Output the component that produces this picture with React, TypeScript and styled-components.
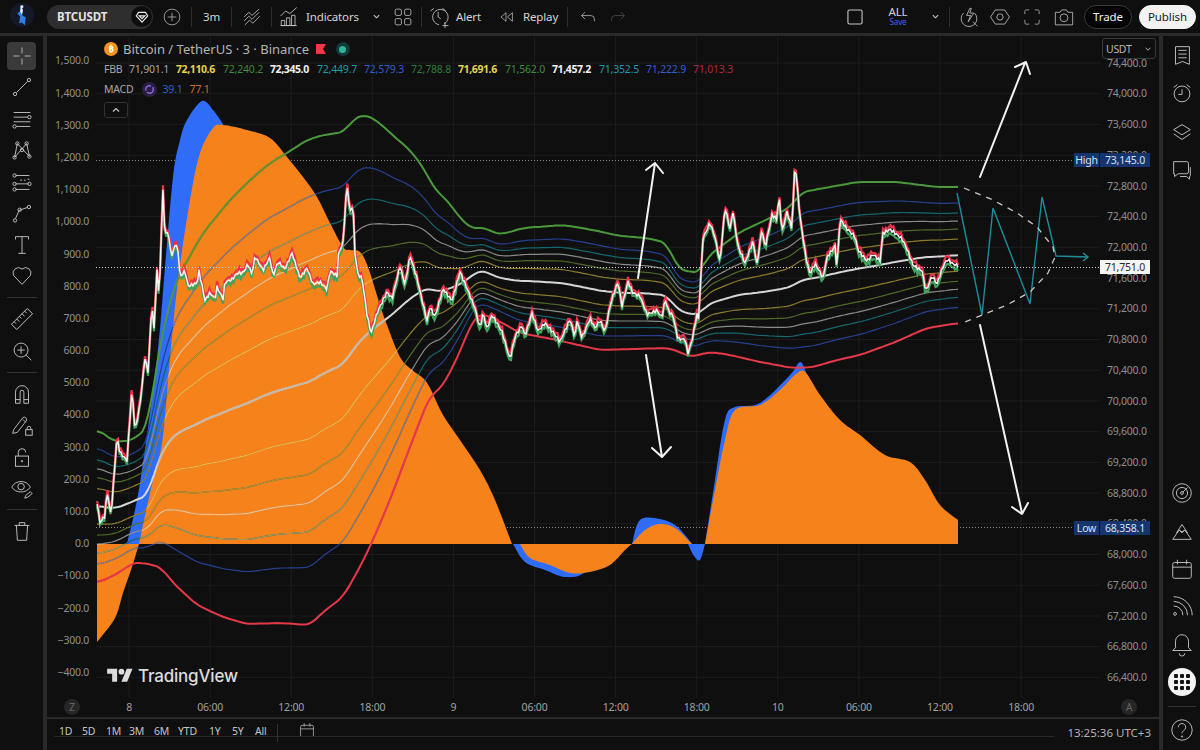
import React from "react";
import styled, { createGlobalStyle } from "styled-components";

type Pt = [number, number];

const GlobalStyle = createGlobalStyle`
  html, body { margin: 0; padding: 0; background: #2a2a2a; }
  * { box-sizing: border-box; }
`;

const FONT = `"Noto Sans", "Liberation Sans", sans-serif`;
const ZERO_Y = 544;

// chart data, read off in page coordinates
const topLine: Pt[] = [[97,429],[115,442],[133,440],[148,427],[157,360],[170,300],[178,277],[203,233],[230,200],[250,180],[270,163],[287,153],[307,140],[323,135],[345,132],[352,120],[365,114],[380,123],[390,133],[410,150],[423,167],[435,190],[447,200],[460,218],[472,229],[485,227],[493,233],[503,234],[523,228],[563,225],[593,230],[620,236],[647,238],[667,243],[675,263],[680,270],[700,273],[707,257],[740,232],[770,218],[790,207],[802,192],[830,187],[857,182],[897,182],[937,187],[958,187]];
const bottomLine: Pt[] = [[97,583],[115,575],[133,563],[140,562],[148,565],[152,563],[157,567],[162,568],[173,583],[197,605],[223,617],[247,624],[280,623],[310,625],[323,612],[343,597],[360,567],[373,540],[390,500],[405,460],[430,395],[440,390],[455,363],[473,320],[480,313],[497,320],[520,333],[557,340],[600,350],[667,348],[680,352],[690,357],[710,352],[730,355],[760,362],[793,368],[813,367],[837,360],[860,355],[893,343],[927,328],[958,323]];
const price: Pt[] = [[97,503],[100,523],[105,517],[107,492],[111,517],[117,438],[120,453],[127,460],[132,387],[135,430],[140,403],[145,357],[148,372],[152,303],[154,330],[157,270],[159,300],[163,190],[165,240],[167,230],[172,257],[175,245],[178,250],[180,277],[185,270],[188,285],[197,282],[199,270],[205,300],[210,293],[215,300],[217,288],[223,300],[225,283],[232,280],[237,273],[243,272],[248,263],[252,273],[255,255],[263,270],[270,258],[273,277],[278,263],[285,270],[292,253],[300,277],[307,267],[313,283],[320,282],[327,290],[330,272],[337,277],[338,257],[343,243],[347,183],[350,213],[353,203],[355,253],[358,273],[362,277],[367,313],[371,333],[377,313],[380,307],[387,293],[392,300],[400,267],[405,285],[410,255],[417,277],[423,303],[427,320],[430,307],[435,317],[443,290],[452,302],[460,272],[468,290],[475,307],[480,327],[483,312],[487,328],[492,315],[502,333],[510,360],[515,337],[522,325],[525,335],[532,312],[538,330],[545,323],[553,333],[560,343],[570,320],[575,337],[577,320],[582,337],[590,317],[595,327],[600,320],[605,332],[610,307],[613,297],[618,283],[622,307],[628,282],[633,293],[640,295],[647,313],[657,310],[662,318],[665,300],[669,313],[673,317],[678,340],[685,340],[688,353],[692,340],[697,313],[698,327],[703,237],[710,222],[715,237],[720,263],[725,208],[730,230],[733,213],[738,247],[745,263],[753,240],[757,263],[762,227],[765,247],[772,215],[777,220],[779,195],[782,233],[787,213],[792,230],[795,162],[800,217],[806,257],[810,273],[815,262],[823,277],[827,257],[835,247],[837,270],[840,220],[847,230],[855,237],[858,250],[867,260],[873,253],[880,260],[883,233],[890,230],[902,240],[907,250],[913,265],[922,270],[926,290],[932,275],[937,283],[943,267],[947,260],[953,265],[958,267]];

const orangeAreas: Pt[][] = [
  [[97,642],[115,618],[123,593],[132,567],[139,544]],
  [[139,544],[150,493],[162,443],[170,358],[178,280],[190,200],[200,153],[213,128],[223,125],[247,130],[270,138],[287,157],[303,177],[317,197],[330,223],[343,247],[350,250],[360,252],[368,267],[380,305],[387,325],[400,357],[412,370],[423,378],[430,388],[443,415],[460,440],[480,470],[495,500],[512,544]],
  [[520,544],[530,558],[550,565],[570,573],[590,572],[610,565],[625,550],[632,544]],
  [[632,544],[645,530],[660,524],[675,528],[690,542],[692,544]],
  [[705,544],[715,490],[725,440],[735,410],[760,405],[780,390],[795,375],[805,372],[820,395],[840,420],[860,435],[885,455],[910,462],[925,480],[940,505],[958,520]],
];
// only the outer edge of each blue part shows, the orange is painted over the rest
const blueAreas: Pt[][] = [
  [[127,544],[140,483],[157,358],[165,267],[173,177],[180,140],[187,120],[202,101],[213,110],[223,124]],
  [[513,544],[525,562],[545,570],[565,577],[585,572],[600,544]],
  [[632,544],[640,520],[660,519],[675,525],[685,535],[692,544]],
  [[688,544],[694,556],[700,560],[705,544]],
  [[705,544],[715,480],[725,420],[735,407],[760,403],[790,375],[800,362],[806,372]],
];

const bands = [
  { r: 1, dark: "#4a9a3c", tint: "#6d8f2c", w: 2 },
  { r: 0.764, dark: "#26408f", tint: "#94806e", w: 1.2 },
  { r: 0.618, dark: "#14666f", tint: "#ac9650", w: 1.2 },
  { r: 0.5, dark: "#8a8a8a", tint: "#f7bd7c", w: 1.2 },
  { r: 0.382, dark: "#4f6a2a", tint: "#b78f36", w: 1.2 },
  { r: 0.236, dark: "#8c7b2a", tint: "#fab347", w: 1.2 },
];

const lerp = (line: Pt[], x: number) => {
  for (let i = 1; i < line.length; i++) {
    if (x <= line[i][0]) {
      const [x0, y0] = line[i - 1];
      const [x1, y1] = line[i];
      return y0 + ((y1 - y0) * (x - x0)) / (x1 - x0);
    }
  }
  return line[line.length - 1][1];
};

const toD = (pts: Pt[]) => "M" + pts.map(([x, y]) => `${x} ${y.toFixed(1)}`).join("L");

// Catmull-Rom through the points, then closed along the zero line of the histogram
const toArea = (pts: Pt[]) => {
  let d = `M${pts[0][0]} ${pts[0][1]}`;
  for (let i = 0; i < pts.length - 1; i++) {
    const p0 = pts[Math.max(i - 1, 0)];
    const p1 = pts[i];
    const p2 = pts[i + 1];
    const p3 = pts[Math.min(i + 2, pts.length - 1)];
    const c1 = [p1[0] + (p2[0] - p0[0]) / 6, p1[1] + (p2[1] - p0[1]) / 6];
    const c2 = [p2[0] - (p3[0] - p1[0]) / 6, p2[1] - (p3[1] - p1[1]) / 6];
    d += `C${c1[0]} ${c1[1]} ${c2[0]} ${c2[1]} ${p2[0]} ${p2[1]}`;
  }
  return d + `L${pts[pts.length - 1][0]} ${ZERO_Y}L${pts[0][0]} ${ZERO_Y}Z`;
};

const xs: number[] = [];
for (let x = 97; x <= 958; x += 3) xs.push(x);

const soften = (vals: number[]) =>
  vals.map((_, i) => {
    const from = Math.max(i - 2, 0);
    const to = Math.min(i + 2, vals.length - 1);
    let sum = 0;
    for (let k = from; k <= to; k++) sum += vals[k];
    return sum / (to - from + 1);
  });

const topVals = soften(xs.map((x) => lerp(topLine, x)));
const bottomVals = soften(xs.map((x) => lerp(bottomLine, x)));

const bandPoints = (r: number, sign: number): Pt[] =>
  xs.map((x, i) => {
    const mid = (topVals[i] + bottomVals[i]) / 2;
    return [x, mid + sign * r * (topVals[i] - mid)];
  });

// candles are too small to tell apart here: a noisy close line with a red and a green edge
const priceXs: number[] = [];
for (let x = 97; x <= 958; x += 1.5) priceXs.push(x);
const noise = (x: number) => Math.sin(x * 1.7) * 1.5 + Math.sin(x * 4.3 + 1) * 1.2;
const closeLine: Pt[] = priceXs.map((x) => [x, lerp(price, x) + noise(x)]);
const highLine: Pt[] = priceXs.map((x) => [x, lerp(price, x) + noise(x) - 2 - Math.abs(noise(x * 1.3))]);
const lowLine: Pt[] = priceXs.map((x) => [x, lerp(price, x) + noise(x) + 2.2 + Math.abs(noise(x * 0.7))]);

const gridY = Array.from({ length: 21 }, (_, i) => 63 + i * 30.72);
const gridX = Array.from({ length: 12 }, (_, i) => 129 + i * 81.1);

const ChartDrawing = () => (
  <svg viewBox="96 36 1004 661" width="1004" height="661" style={{ display: "block" }}>
    <defs>
      <clipPath id="orangeClip">
        {orangeAreas.map((a, i) => (
          <path key={i} d={toArea(a)} />
        ))}
      </clipPath>
    </defs>
    {gridY.map((y) => (
      <line key={y} x1="96" x2="1100" y1={y} y2={y} stroke="#1d1d1d" />
    ))}
    {gridX.map((x) => (
      <line key={x} x1={x} x2={x} y1="36" y2="697" stroke="#1d1d1d" />
    ))}
    <line x1="96" x2="1074" y1="160.5" y2="160.5" stroke="#8c8c8c" strokeDasharray="1 2" />
    <line x1="96" x2="1074" y1="527.5" y2="527.5" stroke="#8c8c8c" strokeDasharray="1 2" />

    {blueAreas.map((a, i) => (
      <path key={i} d={toArea(a)} fill="#2f6cf7" />
    ))}
    {orangeAreas.map((a, i) => (
      <path key={i} d={toArea(a)} fill="#f6821c" />
    ))}

    {bands.map((b) => (
      <path key={b.r} d={toD(bandPoints(b.r, 1))} fill="none" stroke={b.dark} strokeWidth={b.w} />
    ))}
    {bands.map((b) => (
      <path
        key={b.r}
        d={toD(bandPoints(b.r, -1))}
        fill="none"
        stroke={b.r === 1 ? "#e5394a" : b.dark}
        strokeWidth={b.w}
      />
    ))}
    <path d={toD(bandPoints(0, 1))} fill="none" stroke="#d6d6d6" strokeWidth="2" />

    <g clipPath="url(#orangeClip)">
      {bands.map((b) => (
        <path key={b.r} d={toD(bandPoints(b.r, 1))} fill="none" stroke={b.tint} strokeWidth={b.w} />
      ))}
      {bands.map((b) => (
        <path
          key={b.r}
          d={toD(bandPoints(b.r, -1))}
          fill="none"
          stroke={b.r === 1 ? "#e5394a" : b.tint}
          strokeWidth={b.w}
        />
      ))}
      <path d={toD(bandPoints(0, 1))} fill="none" stroke="#c4b8a8" strokeWidth="2" />
    </g>

    <path d={toD(lowLine)} fill="none" stroke="#3fa55a" strokeWidth="2.2" />
    <path d={toD(highLine)} fill="none" stroke="#ea3349" strokeWidth="2.2" />
    <path d={toD(closeLine)} fill="none" stroke="#f4f4f4" strokeWidth="1.5" />

    <line x1="96" x2="1100" y1="267.5" y2="267.5" stroke="#cfcfcf" strokeDasharray="1 2" />

    {/* hand drawn arrows */}
    <g fill="none" stroke="#f2f2f2" strokeWidth="2" strokeLinecap="round" strokeLinejoin="round">
      <path d="M980 177L1025 63M1015 67L1026 62L1030 74" />
      <path d="M980 325L1022 513M1012 507L1022 514L1028 503" />
      <path d="M638 278L655 163M646 170L655 163L663 173" />
      <path d="M646 355L662 457M652 448L662 457L671 447" />
    </g>
    <path
      d="M957 193L982 315L993 208L1030 304L1042 197L1056 256L1088 257M1083 253L1088 257L1083 261"
      fill="none"
      stroke="#1f8c9c"
      strokeWidth="1.4"
    />
    <path
      d="M964 188L993 200L1017 213L1037 227L1053 247L1055 257L1048 273L1030 292L1007 305L982 315L965 322"
      fill="none"
      stroke="#c8c8c8"
      strokeWidth="1.3"
      strokeDasharray="6 6"
    />
  </svg>
);

// icons
const Glyph = styled.svg.attrs({ viewBox: "0 0 28 28", fill: "none", stroke: "currentColor" })<{ $size?: number }>`
  width: ${(p) => p.$size ?? 28}px;
  height: ${(p) => p.$size ?? 28}px;
  stroke-width: 1;
  display: block;
  flex: none;
`;

const dot = (cx: number, cy: number, r = 1.8) => <circle cx={cx} cy={cy} r={r} />;

const leftIcons: React.ReactNode[][] = [
  [
    <><path d="M14 4v7M14 17v7M4 14h7M17 14h7" /></>,
    <><path d="M8 20L20 8" />{dot(6.5, 21.5)}{dot(21.5, 6.5)}</>,
    <><path d="M5 7h18M5 12h15M5 17h18M8 22h15" />{dot(22, 12)}{dot(6, 22)}</>,
    <><path d="M6 22L9 7L22 21L19 7Z" />{dot(6, 22)}{dot(9, 7)}{dot(22, 21)}{dot(19, 7)}{dot(14, 14)}</>,
    <><path d="M7 7h15M7 16h14M7 22h15M12 12h2M16 12h2M20 11h2" />{dot(6, 7)}{dot(6, 16)}{dot(6, 22)}{dot(22, 16)}</>,
    <><path d="M7 20L11 11L20 8" />{dot(6.5, 22)}{dot(11.5, 10.5)}{dot(21.5, 7.5)}</>,
    <><path d="M7 8V5h14v3M14 5v18M10 23h8" /></>,
    <><path d="M14 23L5 13.5a5.8 5.8 0 0 1 9-7a5.8 5.8 0 0 1 9 7Z" /></>,
  ],
  [
    <><g transform="rotate(-45 14 14)"><rect x="2" y="10" width="24" height="8" /><path d="M6 10v3M10 10v4M14 10v3M18 10v4M22 10v3" /></g></>,
    <><circle cx="13" cy="13" r="7.5" /><path d="M18.5 18.5L24 24M13 9v8M9 13h8" /></>,
  ],
  [
    <><path d="M7 24V12a7 7 0 0 1 14 0v12h-5V12a2 2 0 0 0-4 0v12zM7 20h5M16 20h5" /></>,
    <><path d="M5 19L15 6q2-1 3 0t1 3L9 22l-5 1zM15 8l3 3" /><rect x="18" y="19" width="7" height="6" /><path d="M19.5 19v-1.5a2 2 0 0 1 4 0V19" /></>,
    <><rect x="7" y="13" width="14" height="11" /><path d="M10 13V9a4 4 0 0 1 8 0" /><circle cx="14" cy="18.5" r="0.8" /></>,
    <><path d="M3 13C7 5 19 5 23 13C19 20 7 20 3 13Z" /><circle cx="13" cy="12.5" r="3.5" /><path d="M17 25l1-3 5-4 2 2-5 4z" /></>,
  ],
  [
    <><path d="M6 8h16M11 8V5h6v3M8 8l1 16h10l1-16" /></>,
  ],
];

const rightTop: React.ReactNode[] = [
  <><path d="M7 5h15v19l-7.5-3L7 24zM10 9h9M10 13h9M10 17h9" /></>,
  <><circle cx="14" cy="15" r="8.5" /><path d="M14 10v5.5h-4M5 8l4-3M23 8l-4-3" /></>,
  <><path d="M14 6l9 5.5L14 17l-9-5.5zM5 16l9 6 9-6" /></>,
  <><path d="M5 5h14a2 2 0 0 1 2 2v9a2 2 0 0 1-2 2H10l-4 3v-3H5z" /><path d="M23 11v9a1 1 0 0 1-1 1v3l-3-3H12" /></>,
];

const rightBottom: React.ReactNode[] = [
  <><circle cx="14" cy="14" r="10" /><circle cx="14" cy="14" r="6" /><circle cx="14" cy="14" r="1.5" /><path d="M15 13l5-5" /></>,
  <><path d="M4 23L11 13l3 3 3-3 7 10zM8 16l6-9 6 9M11 13l3 2 3-2" /></>,
  <><rect x="4" y="7" width="20" height="17" rx="2" /><path d="M4 12h20M9 4v5M19 4v5" /></>,
  <><path d="M5 14a10 10 0 0 1 10 10M5 9a15 15 0 0 1 15 15M5 4a20 20 0 0 1 20 20" /><circle cx="6.5" cy="22.5" r="1.5" /></>,
  <><path d="M14 4a7 7 0 0 1 7 7v7l3 3H4l3-3v-7a7 7 0 0 1 7-7zM11 24a3 3 0 0 0 6 0" /></>,
];

const AppLogo = () => (
  <svg viewBox="0 0 28 28" width="26" height="26">
    <circle cx="14" cy="14" r="13" fill="#14192a" />
    <path d="M12 3l3 5-1 6 4 3-1 8-3-3-3 1 1-7-3-4 3-2z" fill="#2f7fe0" />
    <path d="M13 4l2 5-1 5-2-4z" fill="#dfe9f7" />
    <circle cx="14" cy="5" r="1.5" fill="#f2f2f2" />
  </svg>
);

const Root = styled.div`
  width: 1200px;
  height: 750px;
  display: flex;
  flex-direction: column;
  gap: 3px;
  background: #2a2a2a;
  font-family: ${FONT};
  overflow: hidden;
`;

const TopBar = styled.header`
  height: 33px;
  flex: none;
  display: flex;
  align-items: center;
  background: #0f0f0f;
  color: #d4d4d4;
  font-size: 11.5px;
  letter-spacing: -0.15px;
  padding-left: 9px;
`;

const LogoSlot = styled.div`
  width: 38px;
  flex: none;
`;

const SymbolPill = styled.div`
  width: 106px;
  height: 24px;
  flex: none;
  display: flex;
  align-items: center;
  justify-content: space-between;
  padding: 0 1px 0 10px;
  border-radius: 12px;
  background: #2e2e2e;
  color: #e2e2e2;
  font-weight: 700;
  font-size: 11.5px;
`;

const SymbolBadge = styled.span`
  width: 21px;
  height: 21px;
  display: flex;
  align-items: center;
  justify-content: center;
  border-radius: 50%;
  background: #0d0d0d;
  color: #e8e8e8;
`;

const TopIcon = styled.div<{ $at: number; $dim?: boolean }>`
  flex: none;
  width: ${(p) => p.$at}px;
  display: flex;
  align-items: center;
  justify-content: center;
  color: ${(p) => (p.$dim ? "#555" : "#c8c8c8")};
`;

const TopText = styled.span<{ $w: number; $center?: boolean }>`
  flex: none;
  width: ${(p) => p.$w}px;
  white-space: nowrap;
  text-align: ${(p) => (p.$center ? "center" : "left")};
`;

const TopSep = styled.i`
  flex: none;
  width: 1px;
  height: 20px;
  background: #2e2e2e;
`;

const Spacer = styled.div<{ $w: number }>`
  flex: none;
  width: ${(p) => p.$w}px;
`;

const LayoutName = styled.div`
  flex: none;
  width: 40px;
  text-align: center;
  font-size: 11.5px;
  line-height: 10px;
  color: #d4d4d4;
  small {
    display: block;
    font-size: 8px;
    color: #3d68e0;
  }
`;

const Pill = styled.button<{ $solid?: boolean; $w: number }>`
  flex: none;
  width: ${(p) => p.$w}px;
  height: 24px;
  padding: 0;
  border-radius: 12px;
  font-family: inherit;
  font-size: 11.5px;
  letter-spacing: -0.1px;
  border: 1px solid ${(p) => (p.$solid ? "#f2f2f2" : "#3a3a3a")};
  background: ${(p) => (p.$solid ? "#f2f2f2" : "#050505")};
  color: ${(p) => (p.$solid ? "#1a1a1a" : "#f0f0f0")};
`;

const Body = styled.div`
  flex: 1;
  min-height: 0;
  display: flex;
  gap: 4px;
`;

const LeftBar = styled.nav`
  width: 43px;
  flex: none;
  padding-top: 4px;
  background: #0f0f0f;
  display: flex;
  flex-direction: column;
  align-items: center;
  color: #c4c4c4;
`;

const Tool = styled.div<{ $active?: boolean }>`
  width: 29px;
  height: 31.5px;
  flex: none;
  display: flex;
  align-items: center;
  justify-content: center;
  position: relative;
  &::before {
    content: "";
    display: ${(p) => (p.$active ? "block" : "none")};
    position: absolute;
    inset: 2px 0;
    background: #3a3a3a;
    border-radius: 4px;
  }
  svg {
    position: relative;
  }
`;

const ToolRule = styled.div`
  flex: none;
  height: 11.5px;
  width: 30px;
  display: flex;
  align-items: center;
  &::after {
    content: "";
    width: 100%;
    height: 1px;
    background: #333;
  }
`;

const ChartColumn = styled.main`
  flex: 1;
  min-width: 0;
  display: flex;
  flex-direction: column;
  background: #0f0f0f;
`;

const ChartPane = styled.section`
  height: 661px;
  flex: none;
  display: flex;
  position: relative;
  overflow: hidden;
`;

const LeftScale = styled.div`
  width: 49px;
  flex: none;
  padding: 8.4px 7px 0 0;
  text-align: right;
  font-size: 10.5px;
  letter-spacing: -0.25px;
  color: #8f8f8f;
`;

const ScaleRow = styled.div<{ $h: number }>`
  height: ${(p) => p.$h}px;
  line-height: ${(p) => p.$h}px;
  white-space: nowrap;
`;

const Plot = styled.div`
  width: 1004px;
  flex: none;
`;

const RightScale = styled.div`
  flex: 1;
  padding: 11.64px 0 0 7px;
  font-size: 10.5px;
  letter-spacing: -0.25px;
  color: #8f8f8f;
`;

const Legend = styled.div`
  position: absolute;
  left: 57px;
  top: 3px;
  color: #a8a8a8;
  font-size: 10.5px;
  letter-spacing: -0.2px;
`;

const LegendRow = styled.div`
  height: 20px;
  display: flex;
  align-items: center;
  white-space: nowrap;
`;

const TitleText = styled.span`
  font-size: 13px;
  letter-spacing: 0;
  color: #b4b4b4;
  margin: 0 7px 0 5px;
`;

const CoinBadge = styled.span`
  width: 14px;
  height: 14px;
  border-radius: 50%;
  background: #f7931a;
  color: #fff;
  font-size: 9px;
  font-weight: 700;
  line-height: 14px;
  text-align: center;
`;

const StatusDot = styled.span`
  width: 14px;
  height: 14px;
  margin-left: 10px;
  border-radius: 50%;
  background: #113a38;
  display: flex;
  align-items: center;
  justify-content: center;
  &::after {
    content: "";
    width: 7px;
    height: 7px;
    border-radius: 50%;
    background: #2fb59e;
  }
`;

const ValueGrid = styled.div`
  display: grid;
  grid-template-columns: 25px repeat(13, 47px);
  align-items: center;
  height: 20px;
`;

const Value = styled.span<{ $c?: string; $bold?: boolean }>`
  color: ${(p) => p.$c ?? "#a8a8a8"};
  font-weight: ${(p) => (p.$bold ? 700 : 400)};
  letter-spacing: ${(p) => (p.$bold ? "-0.4px" : "-0.2px")};
  white-space: nowrap;
`;

const CollapseButton = styled.div`
  width: 24px;
  height: 16px;
  margin-top: 3px;
  border: 1px solid #333;
  border-radius: 3px;
  display: flex;
  align-items: center;
  justify-content: center;
  color: #c8c8c8;
`;

const Watermark = styled.div`
  position: absolute;
  left: 60px;
  top: 630px;
  display: flex;
  align-items: center;
  gap: 5px;
  color: #dcdcdc;
  font-family: Inter, sans-serif;
  font-size: 17px;
  font-weight: 500;
  letter-spacing: -0.2px;
`;

const UnitSelect = styled.div`
  position: absolute;
  right: 3px;
  top: 2px;
  width: 54px;
  height: 21px;
  padding: 0 3px;
  display: flex;
  align-items: center;
  justify-content: space-between;
  background: #0f0f0f;
  border: 1px solid #3a3a3a;
  border-radius: 3px;
  font-size: 10.5px;
  letter-spacing: -0.3px;
  color: #b8b8b8;
`;

const PriceMark = styled.div<{ $y: number }>`
  position: absolute;
  right: 9px;
  top: ${(p) => p.$y - 36}px;
  display: flex;
  gap: 1px;
  font-size: 10.5px;
  letter-spacing: -0.2px;
  line-height: 14px;
  height: 14px;
`;

const MarkName = styled.span`
  width: 25px;
  text-align: center;
  background: #16356e;
  color: #d7e0f0;
`;

const MarkValue = styled.span<{ $light?: boolean }>`
  width: 50px;
  text-align: center;
  background: ${(p) => (p.$light ? "#f4f4f4" : "#16356e")};
  color: ${(p) => (p.$light ? "#2a2a2a" : "#d7e0f0")};
`;

const TimeAxis = styled.div`
  height: 21px;
  flex: none;
  position: relative;
  display: flex;
  align-items: center;
  padding-left: 41.5px;
  font-size: 10.5px;
  letter-spacing: -0.2px;
  color: #a2a2a2;
  border-bottom: 1px solid #2a2a2a;
`;

const TimeTick = styled.span`
  width: 81.1px;
  flex: none;
  text-align: center;
`;

const CornerBadge = styled.span<{ $side: "left" | "right" }>`
  position: absolute;
  ${(p) => (p.$side === "left" ? "left: 17px;" : "right: 22px;")}
  top: 2px;
  width: 16px;
  height: 16px;
  border-radius: 50%;
  background: #262626;
  color: #666;
  font-size: 10px;
  line-height: 16px;
  text-align: center;
`;

const BottomBar = styled.div`
  flex: 1;
  position: relative;
  display: flex;
  align-items: flex-start;
  border-top: 1px solid #2a2a2a;
`;

const RangeStrip = styled.div`
  width: 1000px;
  height: 18px;
  margin-left: 7px;
  flex: none;
  overflow: hidden;
  display: grid;
  grid-template-columns: 23px 24px 23px 25px 24px 31px 23px 23px 22px auto;
  justify-content: start;
  padding: 5px 0 0 5px;
  border-bottom: 1px solid #2a2a2a;
  font-size: 10.5px;
  letter-spacing: -0.2px;
  line-height: 15px;
  color: #c4c4c4;
  white-space: nowrap;
  svg {
    margin-left: 20px;
    margin-top: -3px;
  }
`;

const RangeDivider = styled.i`
  position: absolute;
  left: 230px;
  top: 5px;
  width: 1px;
  height: 18px;
  background: #333;
`;

const Clock = styled.div`
  position: absolute;
  right: 8px;
  top: 6px;
  font-size: 11.5px;
  line-height: 15px;
  color: #b4b4b4;
  white-space: nowrap;
`;

const RightBar = styled.aside`
  width: 37px;
  flex: none;
  background: #0f0f0f;
  display: flex;
  flex-direction: column;
  justify-content: space-between;
  align-items: center;
  color: #c4c4c4;
  padding-bottom: 1px;
`;

const RailGroup = styled.div`
  display: flex;
  flex-direction: column;
  align-items: center;
`;

const RailIcon = styled.div<{ $h?: number }>`
  height: ${(p) => p.$h ?? 38.3}px;
  flex: none;
  display: flex;
  align-items: center;
  justify-content: center;
`;

const AppsButton = styled.div`
  width: 28px;
  height: 28px;
  margin: 5px 0;
  border-radius: 50%;
  background: #f4f4f4;
  display: grid;
  grid-template-columns: repeat(3, 4px);
  grid-auto-rows: 4px;
  gap: 2px;
  place-content: center;
  span {
    background: #141414;
    border-radius: 1px;
  }
`;

const RailRule = styled.div`
  height: 10px;
  width: 28px;
  display: flex;
  align-items: center;
  &::after {
    content: "";
    width: 100%;
    height: 1px;
    background: #333;
  }
`;

const Chevron = ({ size = 9 }: { size?: number }) => (
  <svg viewBox="0 0 10 10" width={size} height={size} fill="none" stroke="currentColor" strokeWidth="1.2">
    <path d="M2 3.5l3 3 3-3" />
  </svg>
);

const leftAxis = ["1,500.0","1,400.0","1,300.0","1,200.0","1,100.0","1,000.0","900.0","800.0","700.0","600.0","500.0","400.0","300.0","200.0","100.0","0.0","−100.0","−200.0","−300.0","−400.0"];
const rightAxis = Array.from({ length: 21 }, (_, i) => (74400 - i * 400).toLocaleString("en-US") + ".0");
const timeTicks = ["8","06:00","12:00","18:00","9","06:00","12:00","18:00","10","06:00","12:00","18:00"];
const ranges = ["1D","5D","1M","3M","6M","YTD","1Y","5Y","All"];

const fbbValues: { v: string; c: string; bold?: boolean }[] = [
  { v: "71,901.1", c: "#a8a8a8" },
  { v: "72,110.6", c: "#e6d24a", bold: true },
  { v: "72,240.2", c: "#3f8a3c" },
  { v: "72,345.0", c: "#f2f2f2", bold: true },
  { v: "72,449.7", c: "#1f9aab" },
  { v: "72,579.3", c: "#3160c8" },
  { v: "72,788.8", c: "#2f7a38" },
  { v: "71,691.6", c: "#e6d24a", bold: true },
  { v: "71,562.0", c: "#3f8a3c" },
  { v: "71,457.2", c: "#f2f2f2", bold: true },
  { v: "71,352.5", c: "#1f9aab" },
  { v: "71,222.9", c: "#3160c8" },
  { v: "71,013.3", c: "#a82c3c" },
];

export default function App() {
  return (
    <Root>
      <GlobalStyle />
      <TopBar>
        <LogoSlot><AppLogo /></LogoSlot>
        <SymbolPill>
          BTCUSDT
          <SymbolBadge>
            <Glyph $size={16}><path d="M8 6h12l4 6-10 11L4 12zM9 12h10l-5 5z" strokeWidth="2" /></Glyph>
          </SymbolBadge>
        </SymbolPill>
        <TopIcon $at={38}><Glyph $size={20}><circle cx="14" cy="14" r="11" /><path d="M14 8v12M8 14h12" /></Glyph></TopIcon>
        <TopSep />
        <TopText $w={39} $center>3m</TopText>
        <TopSep />
        <TopIcon $at={39}><Glyph $size={22}><path d="M4 14l6-6 4 4 9-8M4 19l6-6 4 4 9-9M5 24l6-6 4 4 9-9" /></Glyph></TopIcon>
        <TopSep />
        <TopIcon $at={34}><Glyph $size={24}><path d="M4 13l6-6 5 3 8-7M5 24V18h4v6zM11 24V15h4v9zM17 24V12h4v12zM4 24h19" /></Glyph></TopIcon>
        <TopText $w={61}>Indicators</TopText>
        <TopIcon $at={18}><Chevron /></TopIcon>
        <TopIcon $at={36}><Glyph $size={22}><rect x="4" y="4" width="8" height="8" rx="2" /><rect x="16" y="4" width="8" height="8" rx="2" /><rect x="4" y="16" width="8" height="8" rx="2" /><rect x="16" y="16" width="8" height="8" rx="2" /></Glyph></TopIcon>
        <TopSep />
        <TopIcon $at={34}><Glyph $size={24}><path d="M20 22a9 9 0 1 0-6 1M13 8v6l3 2M4 7l4-3M22 7l-4-3M21 20v7M18 24h7" /></Glyph></TopIcon>
        <TopText $w={33}>Alert</TopText>
        <TopIcon $at={34}><Glyph $size={20}><path d="M14 8l-7 6 7 6zM23 8l-7 6 7 6z" /></Glyph></TopIcon>
        <TopText $w={44}>Replay</TopText>
        <TopSep />
        <TopIcon $at={40}><Glyph $size={20}><path d="M10 7l-5 5 5 5M5 12h13a5 5 0 0 1 5 5v3" /></Glyph></TopIcon>
        <TopIcon $at={20} $dim><Glyph $size={20}><path d="M18 7l5 5-5 5M23 12H10a5 5 0 0 0-5 5v3" /></Glyph></TopIcon>
        <Spacer $w={215} />
        <TopIcon $at={24}><Glyph $size={22}><rect x="5" y="5" width="18" height="18" rx="2" strokeWidth="1.4" /></Glyph></TopIcon>
        <Spacer $w={11} />
        <LayoutName>ALL<small>Save</small></LayoutName>
        <Spacer $w={6} />
        <TopIcon $at={22}><Chevron /></TopIcon>
        <Spacer $w={3} />
        <TopSep />
        <TopIcon $at={38}><Glyph $size={22}><path d="M7 9a10 10 0 1 0 14 0M19 20l6 6M15 3l-4 9h5l-3 8 7-11h-5l2-6z" /></Glyph></TopIcon>
        <TopIcon $at={24}><Glyph $size={22}><path d="M8 5h12l6 9-6 9H8L2 14z" /><circle cx="14" cy="14" r="4" /></Glyph></TopIcon>
        <Spacer $w={8} />
        <TopIcon $at={24}><Glyph $size={20}><path d="M4 10V6a2 2 0 0 1 2-2h4M18 4h4a2 2 0 0 1 2 2v4M24 18v4a2 2 0 0 1-2 2h-4M10 24H6a2 2 0 0 1-2-2v-4" /></Glyph></TopIcon>
        <Spacer $w={8} />
        <TopIcon $at={24}><Glyph $size={22}><path d="M3 8h6l2-3h6l2 3h6v16H3z" /><circle cx="14" cy="15" r="5" /></Glyph></TopIcon>
        <Spacer $w={8} />
        <Pill $w={48}>Trade</Pill>
        <Spacer $w={7} />
        <Pill $solid $w={57}>Publish</Pill>
      </TopBar>

      <Body>
        <LeftBar>
          {leftIcons.map((group, g) => (
            <React.Fragment key={g}>
              {g > 0 && <ToolRule />}
              {group.map((icon, i) => (
                <Tool key={i} $active={g === 0 && i === 0}>
                  <Glyph $size={g === 0 && i === 0 ? 24 : 26}>{icon}</Glyph>
                </Tool>
              ))}
            </React.Fragment>
          ))}
        </LeftBar>

        <ChartColumn>
          <ChartPane>
            <LeftScale>
              {leftAxis.map((t) => (
                <ScaleRow key={t} $h={32.2}>{t}</ScaleRow>
              ))}
            </LeftScale>
            <Plot><ChartDrawing /></Plot>
            <RightScale>
              {rightAxis.map((t) => (
                <ScaleRow key={t} $h={30.72}>{t}</ScaleRow>
              ))}
            </RightScale>

            <Legend>
              <LegendRow>
                <CoinBadge>₿</CoinBadge>
                <TitleText>Bitcoin / TetherUS · 3 · Binance</TitleText>
                <svg viewBox="0 0 10 10" width="10" height="10"><path d="M0 0h10L7 5l3 5H0z" fill="#f23645" /></svg>
                <StatusDot />
              </LegendRow>
              <ValueGrid>
                <Value>FBB</Value>
                {fbbValues.map((f) => (
                  <Value key={f.v} $c={f.c} $bold={f.bold}>{f.v}</Value>
                ))}
              </ValueGrid>
              <LegendRow>
                <Value>MACD</Value>
                <svg viewBox="0 0 16 16" width="15" height="15" style={{ margin: "0 6px 0 8px" }}>
                  <circle cx="8" cy="8" r="8" fill="#2a1f45" />
                  <circle cx="8" cy="8" r="4" fill="none" stroke="#8e6ad8" strokeWidth="1.5" strokeDasharray="9 2" />
                </svg>
                <Value $c="#3160c8">39.1</Value>
                <Value $c="#d2702a" style={{ marginLeft: 7 }}>77.1</Value>
              </LegendRow>
              <CollapseButton>
                <svg viewBox="0 0 10 10" width="10" height="10" fill="none" stroke="currentColor" strokeWidth="1.2"><path d="M2 6.5l3-3 3 3" /></svg>
              </CollapseButton>
            </Legend>

            <Watermark>
              <svg viewBox="0 0 36 28" width="26" height="20" fill="#dcdcdc">
                <path d="M14 22H7V11H0V4h14v18zM28 22h-8l7.5-18h8L28 22z" />
                <circle cx="20" cy="8" r="4" />
              </svg>
              TradingView
            </Watermark>

            <UnitSelect>USDT<Chevron size={8} /></UnitSelect>
            <PriceMark $y={153}><MarkName>High</MarkName><MarkValue>73,145.0</MarkValue></PriceMark>
            <PriceMark $y={260}><MarkValue $light>71,751.0</MarkValue></PriceMark>
            <PriceMark $y={521}><MarkName>Low</MarkName><MarkValue>68,358.1</MarkValue></PriceMark>
          </ChartPane>

          <TimeAxis>
            {timeTicks.map((t, i) => (
              <TimeTick key={i}>{t}</TimeTick>
            ))}
            <CornerBadge $side="left">Z</CornerBadge>
            <CornerBadge $side="right">A</CornerBadge>
          </TimeAxis>

          <BottomBar>
            <RangeStrip>
              {ranges.map((r) => (
                <span key={r}>{r}</span>
              ))}
              <Glyph $size={20}><rect x="5" y="6" width="18" height="18" rx="2" /><path d="M5 11h18M10 3v5M18 3v5" /></Glyph>
            </RangeStrip>
            <RangeDivider />
            <Clock>13:25:36 UTC+3</Clock>
          </BottomBar>
        </ChartColumn>

        <RightBar>
          <RailGroup>
            {rightTop.map((icon, i) => (
              <RailIcon key={i}><Glyph $size={26}>{icon}</Glyph></RailIcon>
            ))}
          </RailGroup>
          <RailGroup>
            {rightBottom.map((icon, i) => (
              <RailIcon key={i} $h={37.7}><Glyph $size={26}>{icon}</Glyph></RailIcon>
            ))}
            <AppsButton>
              {Array.from({ length: 9 }, (_, i) => <span key={i} />)}
            </AppsButton>
            <RailRule />
            <RailIcon $h={38}>
              <Glyph $size={26}>
                <circle cx="14" cy="14" r="11" />
                <path d="M10 11a4 4 0 1 1 6 3.5c-1.5 1-2 1.5-2 3" />
                <circle cx="14" cy="21" r="0.7" />
              </Glyph>
            </RailIcon>
          </RailGroup>
        </RightBar>
      </Body>
    </Root>
  );
}
